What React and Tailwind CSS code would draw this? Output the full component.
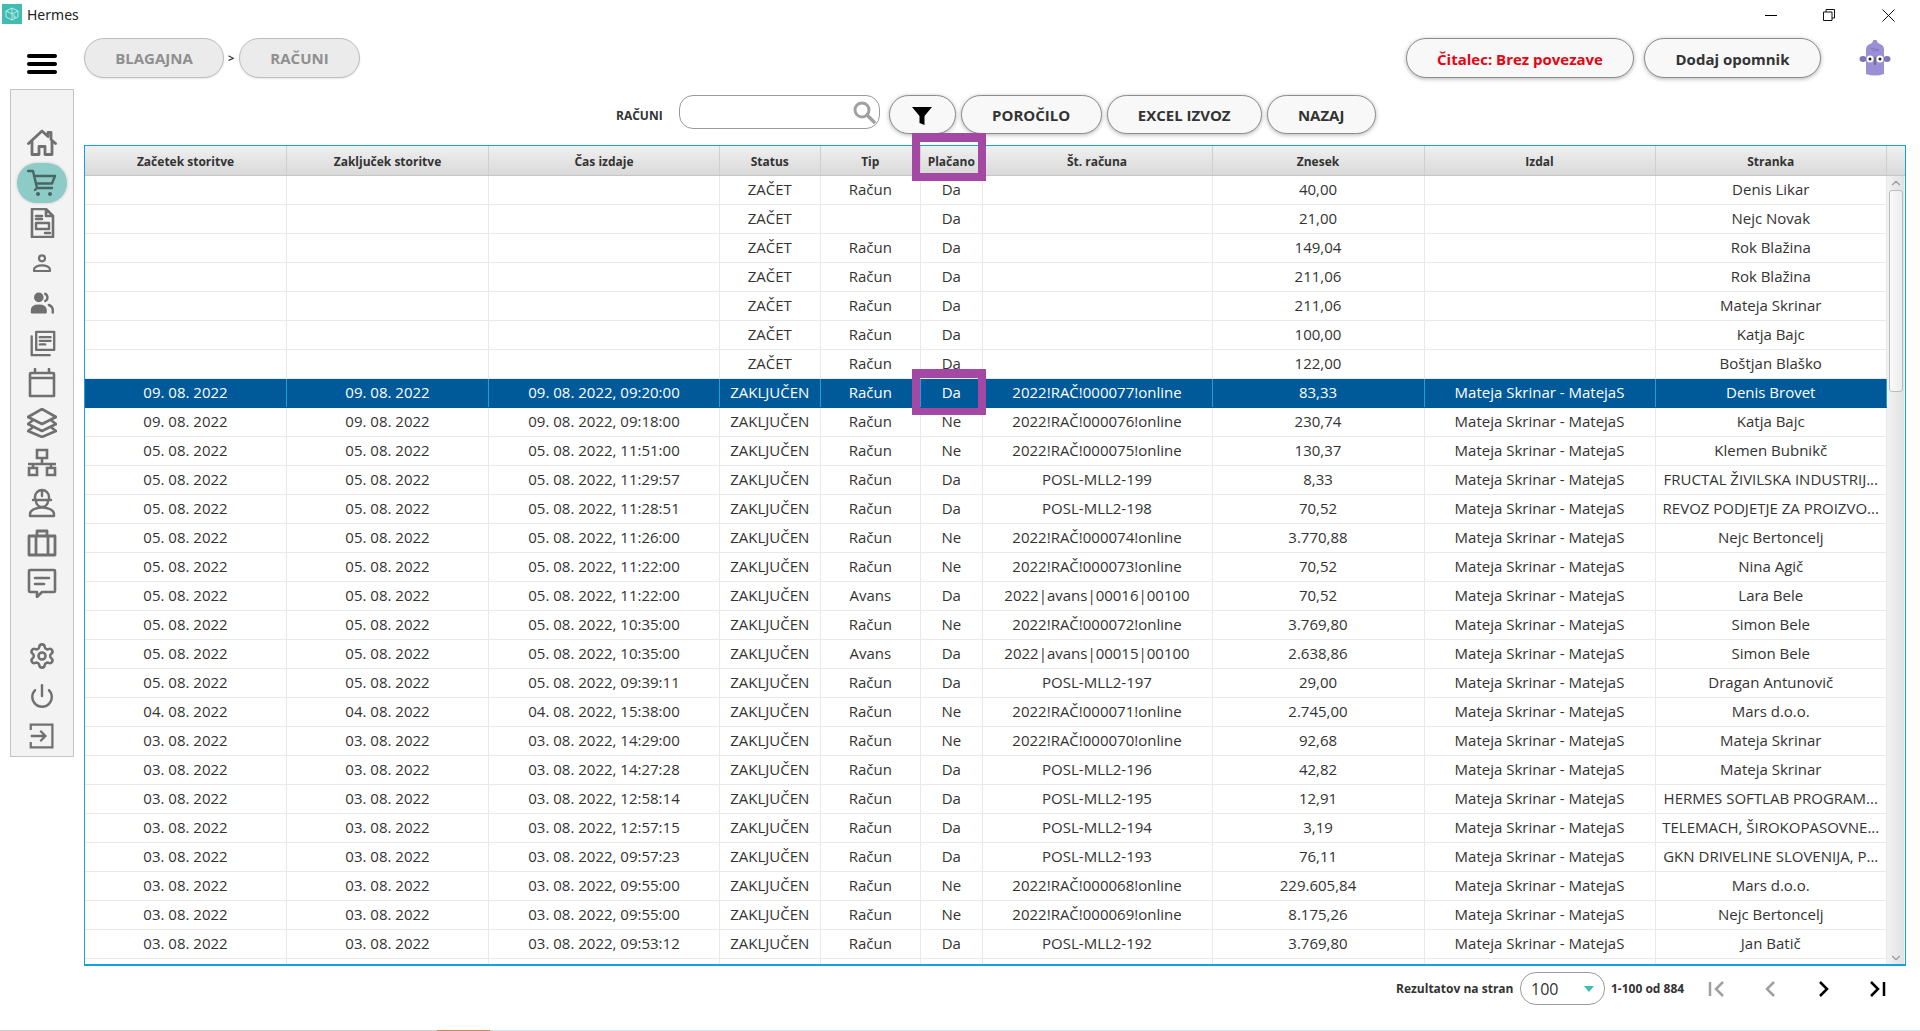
import { Settings, Power, ChevronDown, ChevronUp } from "lucide-react";

const COLUMNS = "grid grid-cols-[202px_202px_231px_100.5px_100.5px_61.5px_230px_212px_231px_231.5px]";
const HEADERS = ["Začetek storitve", "Zaključek storitve", "Čas izdaje", "Status", "Tip", "Plačano", "Št. računa", "Znesek", "Izdal", "Stranka"];

const open = [
  ["Račun", "40,00", "Denis Likar"],
  ["", "21,00", "Nejc Novak"],
  ["Račun", "149,04", "Rok Blažina"],
  ["Račun", "211,06", "Rok Blažina"],
  ["Račun", "211,06", "Mateja Skrinar"],
  ["Račun", "100,00", "Katja Bajc"],
  ["Račun", "122,00", "Boštjan Blaško"],
];

// date, time, type, paid, invoice no, amount, customer
const closed = [
  ["09", "09:20:00", "Račun", "Da", "2022!RAČ!000077!online", "83,33", "Denis Brovet"],
  ["09", "09:18:00", "Račun", "Ne", "2022!RAČ!000076!online", "230,74", "Katja Bajc"],
  ["05", "11:51:00", "Račun", "Ne", "2022!RAČ!000075!online", "130,37", "Klemen Bubnikč"],
  ["05", "11:29:57", "Račun", "Da", "POSL-MLL2-199", "8,33", "FRUCTAL ŽIVILSKA INDUSTRIJ..."],
  ["05", "11:28:51", "Račun", "Da", "POSL-MLL2-198", "70,52", "REVOZ PODJETJE ZA PROIZVO..."],
  ["05", "11:26:00", "Račun", "Ne", "2022!RAČ!000074!online", "3.770,88", "Nejc Bertoncelj"],
  ["05", "11:22:00", "Račun", "Ne", "2022!RAČ!000073!online", "70,52", "Nina Agič"],
  ["05", "11:22:00", "Avans", "Da", "2022|avans|00016|00100", "70,52", "Lara Bele"],
  ["05", "10:35:00", "Račun", "Ne", "2022!RAČ!000072!online", "3.769,80", "Simon Bele"],
  ["05", "10:35:00", "Avans", "Da", "2022|avans|00015|00100", "2.638,86", "Simon Bele"],
  ["05", "09:39:11", "Račun", "Da", "POSL-MLL2-197", "29,00", "Dragan Antunovič"],
  ["04", "15:38:00", "Račun", "Ne", "2022!RAČ!000071!online", "2.745,00", "Mars d.o.o."],
  ["03", "14:29:00", "Račun", "Ne", "2022!RAČ!000070!online", "92,68", "Mateja Skrinar"],
  ["03", "14:27:28", "Račun", "Da", "POSL-MLL2-196", "42,82", "Mateja Skrinar"],
  ["03", "12:58:14", "Račun", "Da", "POSL-MLL2-195", "12,91", "HERMES SOFTLAB PROGRAM..."],
  ["03", "12:57:15", "Račun", "Da", "POSL-MLL2-194", "3,19", "TELEMACH, ŠIROKOPASOVNE..."],
  ["03", "09:57:23", "Račun", "Da", "POSL-MLL2-193", "76,11", "GKN DRIVELINE SLOVENIJA, P..."],
  ["03", "09:55:00", "Račun", "Ne", "2022!RAČ!000068!online", "229.605,84", "Mars d.o.o."],
  ["03", "09:55:00", "Račun", "Ne", "2022!RAČ!000069!online", "8.175,26", "Nejc Bertoncelj"],
  ["03", "09:53:12", "Račun", "Da", "POSL-MLL2-192", "3.769,80", "Jan Batič"],
  ["03", "09:50:00", "Račun", "Da", "POSL-MLL2-191", "61,00", "Jan Batič"],
];

const rows = [
  ...open.map(([tip, sum, who]) => ["", "", "", "ZAČET", tip, "Da", "", sum, "", who]),
  ...closed.map(([d, time, tip, paid, no, sum, who]) => {
    const date = `${d}. 08. 2022`;
    return [date, date, `${date}, ${time}`, "ZAKLJUČEN", tip, paid, no, sum, "Mateja Skrinar - MatejaS", who];
  }),
];

function Glyph({ children, w = 30, h = 30 }) {
  return (
    <svg width={w} height={h} viewBox="0 0 30 30" fill="none" stroke="#707070" strokeWidth="2.4" strokeLinejoin="round" strokeLinecap="round">
      {children}
    </svg>
  );
}

const NAV_TOP = [
  <Glyph key="home"><path d="M1.500 15.500 15 3l6 5.500V4.500h3v7L28.500 15.500M5 13v13.500h7v-8h6v8h7V13" strokeWidth="2.8" /></Glyph>,
  <div key="cart" className="flex h-[40px] w-[50px] items-center justify-center rounded-[20px] bg-[#8ccbc6] shadow-[0_0_3px_rgba(0,0,0,0.2)]">
    <svg width="30" height="30" viewBox="0 0 30 30" fill="none" stroke="#4a6664" strokeWidth="2.4" strokeLinejoin="round" strokeLinecap="round">
      <path d="M1 3h5l4 17h15M7 8h21l-3 7.500H9M10 20l-2 2" />
      <circle cx="11" cy="26" r="2" fill="#4a6664" stroke="none" />
      <circle cx="23" cy="26" r="2" fill="#4a6664" stroke="none" />
    </svg>
  </div>,
  <Glyph key="file"><path d="M5 1h14l7 7v21H5zM19 1v7h7M9 8h6M9 11h6" strokeWidth="2.6" /><path d="M9 15h13v6H9zM18 25h5" /></Glyph>,
  <Glyph key="person" w={20} h={20}><circle cx="15" cy="8" r="4.500" strokeWidth="3.200" /><path d="M3 27v-2c0-4 6-6.500 12-6.500S27 21 27 25v2z" strokeWidth="3.200" /></Glyph>,
  <Glyph key="people" w={26} h={24}>
    <circle cx="11" cy="8" r="5" fill="#707070" strokeWidth="2" />
    <path d="M2 27v-3c0-4 4-6 9-6s9 2 9 6v3z" fill="#707070" strokeWidth="2" />
    <path d="M19 3.500a5 5 0 0 1 0 9M23.500 17.500c3 1 5 3 5 6.500v3" strokeWidth="3" />
  </Glyph>,
  <Glyph key="docs" w={27} h={27}><path d="M8 2h20v20H8zM12 8h12M12 12h12M12 16h6M3 7v21h20" strokeWidth="2.600" /></Glyph>,
  <Glyph key="cal"><path d="M4 5h22a1 1 0 0 1 1 1v22H3V6a1 1 0 0 1 1-1zM8 1v4M22 1v4M3 10h24" strokeWidth="2.600" /></Glyph>,
  <Glyph key="layers"><path d="M15 1 29 9 15 16 1 9zM5 13l-4 3 14 7 14-7-4-3M5 20l-4 3 14 6 14-6-4-3" strokeWidth="2.600" /></Glyph>,
  <Glyph key="net"><path d="M10 2h10v8H10zM15 10v6M1 16h28M2 20h8v7H2zM20 20h8v7h-8zM6 16v4M24 16v4" strokeWidth="2.600" strokeLinecap="butt" strokeLinejoin="miter" /></Glyph>,
  <Glyph key="worker"><path d="M8 12V9a7 7 0 0 1 14 0v3M6 12h18M15 2v6M9 13a6 6 0 0 0 12 0M3 28v-2c0-4 6-6.500 12-6.500S27 22 27 26v2z" /></Glyph>,
  <Glyph key="case"><path d="M2 8h26v19H2zM10 8V3h10v5M9 8v19M21 8v19" strokeWidth="2.800" /></Glyph>,
  <Glyph key="chat"><path d="M3 2h24a1 1 0 0 1 1 1v20a1 1 0 0 1-1 1H15l-5 5v-5H3a1 1 0 0 1-1-1V3a1 1 0 0 1 1-1zM8 10h14M8 16h9" strokeWidth="2.600" /></Glyph>,
];

const NAV_BOTTOM = [
  <Settings key="gear" size={28} color="#707070" strokeWidth={2.2} />,
  <Power key="power" size={26} color="#707070" strokeWidth={2.2} />,
  <Glyph key="exit" w={26} h={26}><path d="M2 8V2h25v26H2v-6M2 15h17M13 9l6 6-6 6" strokeWidth="2.600" strokeLinejoin="miter" strokeLinecap="butt" /></Glyph>,
];

function Pill({ className = "", children }) {
  return (
    <button type="button" className={`flex h-[39px] items-center justify-center rounded-[20px] border border-[#8c8c8c] bg-[#f8f8f8] pt-[2px] text-[15px] font-bold text-[#333] shadow-[0_1px_4px_rgba(0,0,0,0.3)] ${className}`}>
      {children}
    </button>
  );
}

function Crumb({ className = "", children }) {
  return (
    <div className={`flex h-[40px] items-center justify-center rounded-[20px] border border-[#bdbdbd] bg-[#ebebeb] text-[15px] font-bold text-[#8f8f8f] shadow-[0_1px_2px_rgba(0,0,0,0.1)] ${className}`}>
      {children}
    </div>
  );
}

function Table() {
  return (
    <div className="relative h-[821px] w-[1822px] overflow-hidden border-x border-b-2 border-t border-[#12a3de]">
      <div className="flex h-[30px] border-b border-[#c6c6c6] bg-gradient-to-b from-[#f0f0f0] to-[#d9d9d9]">
        <div className={COLUMNS}>
          {HEADERS.map((h) => (
            <div key={h} className="flex items-center justify-center border-r border-[#cfcfcf] pt-[2px] text-[12px] font-bold text-[#333]">
              {h}
            </div>
          ))}
        </div>
      </div>
      <div className="flex">
        <div className="w-[1802px]">
          {rows.map((row, i) => {
            const selected = i === 7;
            return (
              <div key={i} className={`${COLUMNS} h-[29px] border-b text-[15px] ${selected ? "border-[#005a9a] bg-[#005a9a] text-white" : "border-[#e9e9e9] text-[#333]"}`}>
                {row.map((cell, j) => (
                  <div key={j} className={`flex items-center justify-center overflow-hidden whitespace-nowrap border-r pb-[2px] ${selected ? "border-[#1ca0d8]" : "border-[#e9e9e9]"}`}>
                    {cell}
                  </div>
                ))}
              </div>
            );
          })}
        </div>
        {/* scrollbar */}
        <div className="flex h-[789px] w-[17px] flex-col items-center bg-gradient-to-r from-[#f2f2f2] to-[#e2e2e2]">
          <ChevronUp size={14} color="#9a9a9a" className="h-[14px] shrink-0" />
          <div className="h-[202px] w-[14px] rounded-[3px] border border-[#bcbcbc] bg-gradient-to-r from-[#fafafa] to-[#ececec]" />
          <div className="flex-1" />
          <ChevronDown size={14} color="#9a9a9a" className="h-[14px] shrink-0" />
        </div>
      </div>
    </div>
  );
}

export default function App() {
  return (
    <div className="relative flex h-[1031px] w-full flex-col overflow-hidden bg-white font-['Open_Sans',sans-serif] text-[#333]">
      {/* window title bar */}
      <div className="flex h-[30px] items-center justify-between pl-[2px] pr-[7px]">
        <div className="flex items-center gap-[5px] pb-[2px]">
          <div className="flex h-[20px] w-[20px] items-center justify-center bg-[#3fbdb0]">
            <svg width="14" height="14" viewBox="0 0 14 14" fill="none" stroke="#bfeae5" strokeWidth="1">
              <path d="M7 1 13 4v6l-6 3-6-3V4zM7 1v12M1 4l6 3 6-3M9 7v4l2-1.500" />
            </svg>
          </div>
          <span className="font-['Noto_Sans',sans-serif] text-[14px] text-[#222]">Hermes</span>
        </div>
        <div className="flex items-center">
          <div className="flex h-[30px] w-[56px] items-center justify-center">
            <div className="h-px w-[12px] bg-black" />
          </div>
          <div className="mr-[4px] flex h-[30px] w-[60px] items-center justify-center">
            <svg width="12" height="12" viewBox="0 0 12 12" fill="none" stroke="#111" strokeWidth="1">
              <path d="M.5 3h8.500v8.500H.5zM3 3V.5h8.500V9H9" />
            </svg>
          </div>
          <div className="flex h-[30px] w-[50px] items-center justify-center">
            <svg width="13" height="13" viewBox="0 0 13 13" stroke="#111" strokeWidth="1">
              <path d="M.5.5l12 12M12.500.5l-12 12" />
            </svg>
          </div>
        </div>
      </div>

      <div className="flex flex-1">
        {/* left rail */}
        <div className="w-[84px] shrink-0 pt-[24px]">
          <div className="ml-[27px] flex h-[20px] w-[30px] flex-col justify-between">
            <div className="h-[4px] rounded-full bg-black" />
            <div className="h-[4px] rounded-full bg-black" />
            <div className="h-[4px] rounded-full bg-black" />
          </div>
          <div className="ml-[10px] mt-[15px] flex h-[668px] w-[64px] flex-col items-center border border-[#c4c4c4] bg-[#f3f3f3] pt-[33px]">
            {NAV_TOP.map((icon, i) => (
              <div key={i} className="flex h-[40px] shrink-0 items-center justify-center">{icon}</div>
            ))}
            <div className="h-[33px] shrink-0" />
            {NAV_BOTTOM.map((icon, i) => (
              <div key={i} className="flex h-[40px] shrink-0 items-center justify-center">{icon}</div>
            ))}
          </div>
        </div>

        <div className="flex-1 pt-[8px]">
          {/* breadcrumb + reader status */}
          <div className="flex h-[40px] items-center">
            <Crumb className="w-[140px]">BLAGAJNA</Crumb>
            <span className="mx-[4px] w-[7px] text-[11px] font-bold">&gt;</span>
            <Crumb className="w-[121px]">RAČUNI</Crumb>
            <div className="flex-1" />
            <Pill className="h-[40px] w-[228px]">
              <span className="text-[#e30613]">Čitalec: Brez povezave</span>
            </Pill>
            <Pill className="ml-[10px] h-[40px] w-[177px]">Dodaj opomnik</Pill>
            <div className="ml-[34px] mr-[25px] flex w-[40px] justify-center">
              <svg width="32" height="38" viewBox="0 0 32 38">
                <path d="M7 35V10Q7 6 13 4l1.500-3h3L19 4q6 2 6 6v25q-9 3-18 0z" fill="#9b8fd6" />
                <path d="M11 9l9 2M13 12l7-1" stroke="#7f74b8" strokeWidth="0.800" fill="none" />
                <ellipse cx="4" cy="20" rx="3.500" ry="3" fill="#7f74b8" />
                <ellipse cx="28" cy="20" rx="3.500" ry="3" fill="#7f74b8" />
                <circle cx="11" cy="20" r="3.500" fill="#fff" />
                <circle cx="21" cy="20" r="3.500" fill="#fff" />
                <circle cx="11" cy="20" r="1.500" fill="#222" />
                <circle cx="21" cy="20" r="1.500" fill="#222" />
                <path d="M16 18v8" stroke="#333" strokeWidth="0.800" />
              </svg>
            </div>
          </div>

          {/* table toolbar */}
          <div className="mt-[17px] flex h-[39px] items-start">
            <span className="ml-[532px] mt-[12px] text-[12px] font-bold leading-[18px] text-[#333]">RAČUNI</span>
            <div className="ml-[16px] flex h-[34px] w-[201px] items-center justify-end rounded-[14px] border border-[#9a9a9a] bg-white pr-[3px]">
              <svg width="24" height="24" viewBox="0 0 24 24" fill="none" stroke="#a0a0a0">
                <circle cx="10" cy="10" r="7" strokeWidth="3" />
                <path d="M15 15l7 7" strokeWidth="3.500" strokeLinecap="round" />
              </svg>
            </div>
            <Pill className="ml-[9px] w-[67px]">
              <svg width="20" height="20" viewBox="0 0 20 20" fill="#000">
                <path d="M0 1h20L12.500 10v9l-5-2v-7z" />
              </svg>
            </Pill>
            <Pill className="ml-[5px] w-[141px]">POROČILO</Pill>
            <Pill className="ml-[5px] w-[155px]">EXCEL IZVOZ</Pill>
            <Pill className="ml-[5px] w-[109px]">NAZAJ</Pill>
          </div>

          <div className="mt-[11px]">
            <Table />
          </div>

          {/* pagination */}
          <div className="mt-[6px] flex h-[33px] items-center">
            <span className="ml-[1312px] w-[124px] shrink-0 whitespace-nowrap text-[12px] font-bold">Rezultatov na stran</span>
            <div className="flex h-[33px] w-[85px] shrink-0 items-center justify-between rounded-[16px] border border-[#9a9a9a] px-[10px] text-[16px]">
              <span>100</span>
              <div className="h-0 w-0 border-x-[5px] border-t-[6px] border-x-transparent border-t-[#3fbdb0]" />
            </div>
            <span className="ml-[6px] w-[73px] shrink-0 whitespace-nowrap text-[12px] font-bold">1-100 od 884</span>
            <svg className="ml-[24px]" width="18" height="16" viewBox="0 0 18 16" fill="none" stroke="#a0a0a0" strokeWidth="2.500">
              <path d="M2 1v14M15 1 8 8l7 7" />
            </svg>
            <svg className="ml-[38px]" width="12" height="16" viewBox="0 0 12 16" fill="none" stroke="#a0a0a0" strokeWidth="2.500">
              <path d="M10 1 3 8l7 7" />
            </svg>
            <svg className="ml-[42px]" width="12" height="16" viewBox="0 0 12 16" fill="none" stroke="#000" strokeWidth="2.500">
              <path d="M2 1l7 7-7 7" />
            </svg>
            <svg className="ml-[39px]" width="18" height="16" viewBox="0 0 18 16" fill="none" stroke="#000" strokeWidth="2.500">
              <path d="M2 1l7 7-7 7M15 1v14" />
            </svg>
          </div>
        </div>
      </div>

      {/* strip of the desktop showing under the window */}
      <div className="flex h-px">
        <div className="w-[437px] bg-[#cfcfcf]" />
        <div className="w-[53px] bg-[#c98a5a]" />
        <div className="flex-1 bg-[#cfe6ea]" />
      </div>

      {/* purple highlight frames drawn over the Plačano column */}
      <div className="absolute left-[912px] top-[133px] h-[48px] w-[74px] border-x-[8px] border-b-[8px] border-t-[9px] border-[#a349a4]" />
      <div className="absolute left-[912px] top-[369px] h-[46px] w-[74px] border-x-[8px] border-b-[7px] border-t-[9px] border-[#a349a4]" />
    </div>
  );
}
